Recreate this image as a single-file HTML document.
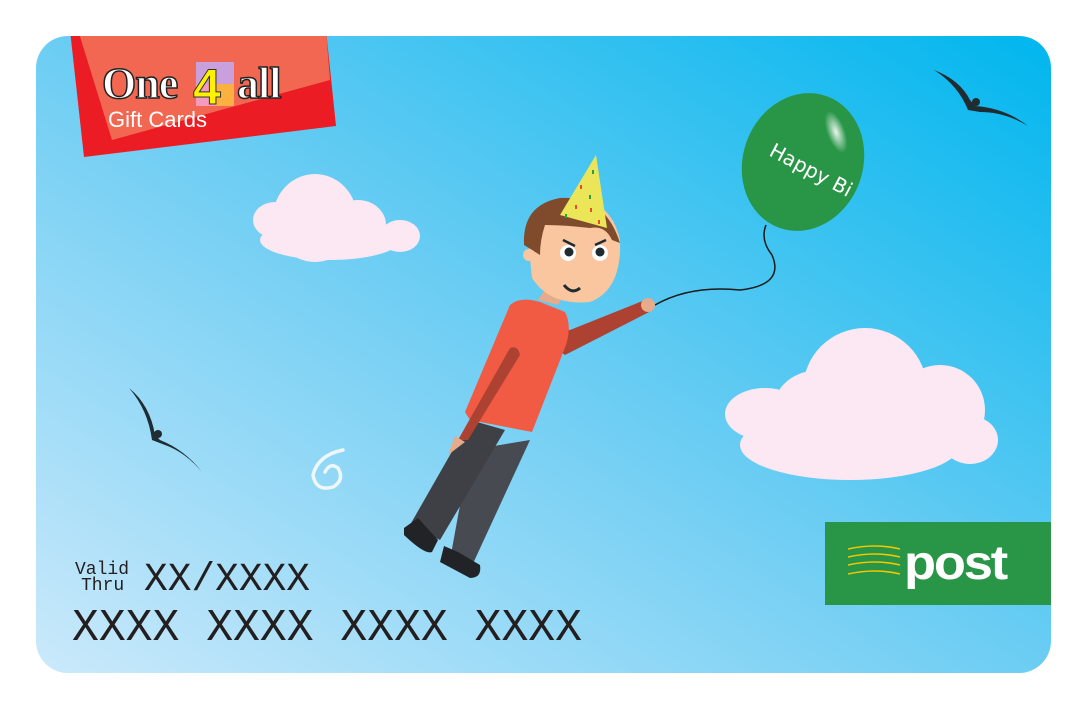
<!DOCTYPE html>
<html><head><meta charset="utf-8"><style>
html,body{margin:0;padding:0;background:#fff;width:1087px;height:709px;overflow:hidden}
svg{display:block}
</style></head><body>
<svg width="1087" height="709" viewBox="0 0 1087 709" xmlns="http://www.w3.org/2000/svg">
<defs>
<linearGradient id="bg" x1="0" y1="1" x2="1" y2="0">
<stop offset="0" stop-color="#cbe9fb"/>
<stop offset="0.5" stop-color="#6ccdf3"/>
<stop offset="1" stop-color="#00b6ee"/>
</linearGradient>
<clipPath id="card"><rect x="36" y="36" width="1015" height="637" rx="32"/></clipPath>
<radialGradient id="hl" cx="0.5" cy="0.5" r="0.5"><stop offset="0" stop-color="#fff" stop-opacity="0.9"/><stop offset="1" stop-color="#fff" stop-opacity="0"/></radialGradient>
</defs>
<g clip-path="url(#card)">
<rect x="36" y="36" width="1015" height="637" fill="url(#bg)"/>
<!-- logo -->
<polygon points="70,30 326,30 336,126 84,157" fill="#ec1c24"/>
<polygon points="78,30 326,30 330,80 112,140" fill="#f47a5d" opacity="0.8"/>
<text x="102" y="98" font-family="Liberation Serif,serif" font-weight="bold" font-size="44" fill="#fff" stroke="#222" stroke-width="1.5" letter-spacing="-1">One</text>
<rect x="196" y="62" width="38" height="44" fill="#c9a0dc"/>
<rect x="196" y="84" width="19" height="22" fill="#f49ac1"/><rect x="215" y="84" width="19" height="22" fill="#fbb040"/>
<text x="193" y="104" font-family="Liberation Sans,sans-serif" font-weight="bold" font-size="50" fill="#fff200" stroke="#333" stroke-width="1">4</text>
<text x="237" y="98" font-family="Liberation Serif,serif" font-weight="bold" font-size="44" fill="#fff" stroke="#222" stroke-width="1.5" letter-spacing="-1">all</text>
<text x="108" y="127" font-family="Liberation Sans,sans-serif" font-size="22" fill="#fff">Gift Cards</text>
<!-- clouds -->
<g fill="#fbe8f2">
<ellipse cx="315" cy="218" rx="42" ry="44"/><ellipse cx="275" cy="220" rx="22" ry="18"/><ellipse cx="358" cy="225" rx="28" ry="25"/><ellipse cx="400" cy="236" rx="20" ry="16"/><ellipse cx="330" cy="240" rx="70" ry="20"/>
<ellipse cx="865" cy="390" rx="62" ry="62"/><ellipse cx="765" cy="414" rx="40" ry="26"/><ellipse cx="820" cy="405" rx="45" ry="35"/><ellipse cx="940" cy="410" rx="45" ry="45"/><ellipse cx="970" cy="440" rx="28" ry="24"/><ellipse cx="850" cy="445" rx="110" ry="35"/>
</g>
<!-- birds -->
<g fill="#1f2d33">
<path d="M129,388 Q150,405 155,435 L160,440 Q185,450 202,472 Q185,452 165,445 L152,440 Q148,410 129,388Z"/>
<circle cx="158" cy="434" r="4"/>
<path d="M934,70 Q960,80 970,100 L975,106 Q1005,108 1028,126 Q1005,112 980,112 L968,110 Q958,85 934,70Z"/>
<circle cx="976" cy="102" r="4"/>
</g>
<!-- swirl -->
<path d="M343,450 Q318,455 313,475 Q316,492 333,487 Q345,480 338,468 Q330,462 325,472" fill="none" stroke="#eef7fc" stroke-width="3.5" stroke-linecap="round"/>
<!-- balloon -->
<ellipse cx="803" cy="162" rx="60" ry="70" transform="rotate(20 803 162)" fill="#299647"/>
<ellipse cx="836" cy="132" rx="9" ry="22" transform="rotate(-20 836 132)" fill="url(#hl)"/>
<text x="768" y="155" transform="rotate(28 768 155)" font-family="DejaVu Sans,sans-serif" font-size="20" fill="#fff">Happy Bi</text>
<path d="M766,225 Q760,240 772,255 Q785,285 740,290 Q690,285 655,305" fill="none" stroke="#1a1a1a" stroke-width="1.5"/>
<!-- man -->
<path d="M520,320 L570,330 L645,300 L653,310 L565,355 Z" fill="#ad4233"/>
<circle cx="648" cy="305" r="7" fill="#e5ab8a"/>
<path d="M450,560 L470,450 L530,440 L470,570 Z" fill="#474a51"/>
<path d="M410,525 L470,420 L505,430 L440,540 Z" fill="#3f4045"/>
<path d="M404,528 L418,518 L438,540 L432,552 Q425,555 404,535Z" fill="#222327"/>
<path d="M444,546 L458,552 L480,565 Q482,578 470,578 L440,562Z" fill="#222327"/>
<path d="M465,412 L510,305 Q520,296 540,302 L565,312 Q572,325 566,345 L532,432 L470,420 Z" fill="#f15b44"/>
<path d="M510,348 Q518,345 520,355 L468,440 L458,440 Z" fill="#ad4233"/>
<path d="M455,436 L465,442 L448,455 Z" fill="#e5ab8a"/>
<path d="M538,300 L548,285 L565,292 L558,305 Z" fill="#e5ab8a"/>
<path d="M528,240 Q528,200 565,198 Q610,196 620,240 Q622,290 590,302 Q550,306 532,278 Z" fill="#fac6a0"/>
<path d="M524,245 Q522,205 560,198 Q605,195 620,243 L612,240 Q605,225 590,228 Q565,225 545,225 Q540,240 540,255 Z" fill="#7f4b2c"/>
<circle cx="529" cy="255" r="6" fill="#fac6a0"/>
<polygon points="560,215 596,155 607,228" fill="#ebe657"/>
<g fill="#e84b2d"><rect x="580" y="185" width="2" height="4"/><rect x="575" y="205" width="2" height="4"/><rect x="590" y="208" width="2" height="4"/><rect x="598" y="220" width="2" height="4"/></g>
<g fill="#28a04b"><rect x="592" y="170" width="2" height="4"/><rect x="565" y="214" width="2" height="4"/><rect x="589" y="195" width="2" height="4"/></g>
<circle cx="568" cy="253" r="8" fill="#fff"/><circle cx="600" cy="253" r="8" fill="#fff"/>
<circle cx="569" cy="252" r="4.5" fill="#1e2b31"/><circle cx="600" cy="252" r="4.5" fill="#1e2b31"/>
<path d="M563,240 L575,246 M606,240 L595,245" stroke="#1e2b31" stroke-width="2.5"/>
<path d="M564,285 Q572,295 580,288" fill="none" stroke="#1e2b31" stroke-width="3"/>
</g>
<!-- post -->
<rect x="825" y="522" width="226" height="83" fill="#299647"/>
<g fill="none" stroke="#f2c700" stroke-width="1.6">
<path d="M848,549 Q875,543 900,549"/><path d="M848,557 Q875,551 900,557"/><path d="M848,565 Q875,559 900,565"/><path d="M848,574 Q875,568 900,574"/>
</g>
<text x="904" y="579" font-family="Liberation Sans,sans-serif" font-weight="bold" font-size="48" fill="#fff" letter-spacing="-2" textLength="102" lengthAdjust="spacingAndGlyphs">post</text>
<!-- text -->
<text x="75" y="574" font-family="Liberation Mono,monospace" font-size="18" fill="#231f20">Valid</text>
<text x="81" y="590" font-family="Liberation Mono,monospace" font-size="18" fill="#231f20">Thru</text>
<text x="144" y="590" font-family="Liberation Mono,monospace" font-size="39.5" fill="#231f20" textLength="166" lengthAdjust="spacingAndGlyphs">XX/XXXX</text>
<text x="72" y="640" font-family="Liberation Mono,monospace" font-size="45" fill="#231f20" textLength="510" lengthAdjust="spacingAndGlyphs">XXXX XXXX XXXX XXXX</text>
</svg>
</body></html>
